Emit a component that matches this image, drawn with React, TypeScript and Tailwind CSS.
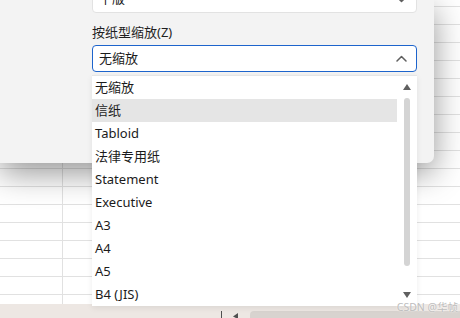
const options = [
  "无缩放",
  "信纸",
  "Tabloid",
  "法律专用纸",
  "Statement",
  "Executive",
  "A3",
  "A4",
  "A5",
  "B4 (JIS)",
];

function Chevron({ up }: { up?: boolean }) {
  return (
    <svg width="11" height="7" viewBox="0 0 11 7">
      <path
        d={up ? "M1 6 L5.5 1.5 L10 6" : "M1 1 L5.5 5.5 L10 1"}
        fill="none"
        stroke="#5f5f5f"
        strokeWidth="1.5"
        strokeLinecap="round"
        strokeLinejoin="round"
      />
    </svg>
  );
}

export default function App() {
  // spreadsheet rows behind the dialog: first partial row, then 18px rows
  const rows = Array.from({ length: 16 });

  return (
    <div
      className="relative w-[460px] h-[318px] overflow-hidden bg-white text-[13px] text-[#1b1b1b]"
      style={{ fontFamily: '"Noto Sans", "Noto Sans CJK SC", sans-serif' }}
    >
      {/* Sheet grid */}
      <div className="flex flex-col h-full">
        <div className="flex h-[7px] border-b border-[#e1e1e1]">
          <div className="w-[63px] border-r border-[#e1e1e1]" />
        </div>
        {rows.map((_, i) => (
          <div key={i} className="flex h-[18px] border-b border-[#e1e1e1]">
            <div className="w-[63px] border-r border-[#e1e1e1]" />
          </div>
        ))}
        <div className="flex h-[9px]">
          <div className="w-[63px] border-r border-[#e1e1e1]" />
        </div>

        {/* Status bar */}
        <div className="flex h-[14px] items-end bg-[#ede7e3]">
          <div className="w-[221px]" />
          <div className="w-px h-[7px] bg-[#505050]" />
          <svg width="6" height="6" viewBox="0 0 6 6" className="ml-[11px] mb-[-1px]">
            <path d="M5 0 L0 3.5 L5 6 Z" fill="#505050" />
          </svg>
          <div className="ml-auto w-[210px] h-[7px] rounded-tl-[4px] bg-[#d8d3cf]" />
        </div>
      </div>

      {/* Dialog */}
      <div className="absolute left-0 top-0 w-[434px] h-[163px] rounded-br-[7px] bg-[#f3f3f3] pl-[92px] pr-[17px] shadow-[0_10px_32px_rgba(0,0,0,0.42)]">
        <div className="flex flex-col mt-[-15px]">
          <div className="flex h-[28px] items-center justify-between rounded-[4px] border border-[#e2e2e2] bg-white pl-[6px] pr-[9px]">
            <span>平版</span>
            <Chevron />
          </div>
          <div className="mt-[10px] h-[18px] leading-[18px] text-[#1f1f1f]">按纸型缩放(Z)</div>
          <div className="mt-[4px] flex h-[27px] items-center justify-between rounded-[4px] border border-[#1d64cc] bg-white pl-[6px] pr-[9px]">
            <span>无缩放</span>
            <Chevron up />
          </div>
        </div>
      </div>

      {/* Dropdown list */}
      <div className="absolute left-[92px] top-[75px] w-[325px] h-[231px] flex overflow-hidden border-t border-[#e6e6e6] bg-white shadow-[0_2px_6px_rgba(0,0,0,0.08)]">
        <ul className="w-[305px] flex flex-col">
          {options.map((o) => (
            <li
              key={o}
              className={`flex h-[23px] shrink-0 items-center pl-[3px] ${o === "信纸" ? "bg-[#e5e5e5]" : ""}`}
            >
              {o}
            </li>
          ))}
        </ul>
        <div className="w-[20px] flex flex-col items-center">
          <div className="h-[22px] flex items-center justify-center">
            <svg width="8" height="6" viewBox="0 0 8 6">
              <path d="M4 0 L8 6 L0 6 Z" fill="#606060" />
            </svg>
          </div>
          <div className="w-[6px] h-[168px] rounded-full bg-[#d4d4d4]" />
          <div className="flex-1" />
          <div className="h-[22px] flex items-center justify-center">
            <svg width="8" height="6" viewBox="0 0 8 6">
              <path d="M0 0 L8 0 L4 6 Z" fill="#606060" />
            </svg>
          </div>
        </div>
      </div>

      {/* Watermark */}
      <div className="absolute right-[2px] top-[301px] text-[10.5px] leading-[12px] text-[#bdbdbd] [text-shadow:0_0_2px_#fff]">
        CSDN @华帧
      </div>
    </div>
  );
}
